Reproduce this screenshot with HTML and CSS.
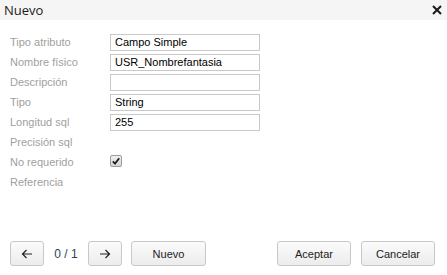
FILE: index.html
```html
<!DOCTYPE html>
<html lang="es">
<head>
<meta charset="utf-8">
<title>Nuevo</title>
<link rel="stylesheet" href="styles.css">
</head>
<body>
<div class="dialog">
  <div class="titlebar">
    <span class="title">Nuevo</span>
    <span class="close" aria-label="Cerrar">
      <svg width="10" height="10" viewBox="0 0 10 10"><path d="M1 1 L9 9 M9 1 L1 9" stroke="#1a1a1a" stroke-width="2" fill="none"/></svg>
    </span>
  </div>
  <div class="form">
    <div class="row"><label class="lbl">Tipo atributo</label><div class="field">Campo Simple</div></div>
    <div class="row"><label class="lbl">Nombre físico</label><div class="field">USR_Nombrefantasia</div></div>
    <div class="row"><label class="lbl">Descripción</label><div class="field"></div></div>
    <div class="row"><label class="lbl">Tipo</label><div class="field">String</div></div>
    <div class="row"><label class="lbl">Longitud sql</label><div class="field">255</div></div>
    <div class="row"><label class="lbl">Precisión sql</label></div>
    <div class="row"><label class="lbl">No requerido</label>
      <span class="check"><svg width="8" height="8" viewBox="0 0 8 8"><path d="M0.8 4.4 L3 6.6 L7.2 1.2" stroke="#1e1e1e" stroke-width="1.8" fill="none"/></svg></span>
    </div>
    <div class="row"><label class="lbl">Referencia</label></div>
  </div>
  <div class="footer">
    <div class="group">
      <button class="btn icon-btn"><svg width="12" height="10" viewBox="0 0 12 10"><path d="M11 5 H1.5 M5.5 1 L1.5 5 L5.5 9" stroke="#222" stroke-width="1.2" fill="none"/></svg></button>
      <span class="counter">0 / 1</span>
      <button class="btn icon-btn"><svg width="12" height="10" viewBox="0 0 12 10"><path d="M1 5 H10.5 M6.5 1 L10.5 5 L6.5 9" stroke="#222" stroke-width="1.2" fill="none"/></svg></button>
      <button class="btn nuevo">Nuevo</button>
    </div>
    <div class="group right">
      <button class="btn wide">Aceptar</button>
      <button class="btn wide">Cancelar</button>
    </div>
  </div>
</div>
</body>
</html>
```
FILE: styles.css
```css
html, body {
  margin: 0;
  padding: 0;
  background: #fff;
}
.dialog {
  width: 447px;
  height: 275px;
  display: flex;
  flex-direction: column;
  font-family: "Liberation Sans", Arial, sans-serif;
}
.titlebar {
  height: 20px;
  background: #f5f5f5;
  display: flex;
  align-items: center;
  justify-content: space-between;
  padding: 0 4px 0 4px;
}
.title {
  font-family: "Open Sans", "DejaVu Sans", sans-serif;
  font-size: 13px;
  color: #1b1b1b;
  line-height: 20px;
}
.close {
  display: flex;
  width: 10px;
  height: 10px;
  margin-right: 1px;
}
.form {
  flex: 1;
  padding: 12px 0 0 10px;
}
.row {
  height: 20px;
  display: flex;
  align-items: center;
}
.lbl {
  width: 100px;
  font-size: 11px;
  color: #a0a0a0;
}
.field {
  width: 140px;
  height: 15px;
  border: 1px solid #c9c9c9;
  padding: 0 4px;
  font-size: 11px;
  line-height: 15px;
  color: #000;
  background: #fff;
}
.check {
  width: 10px;
  height: 10px;
  border: 1px solid #9c9c9c;
  border-radius: 2px;
  background: linear-gradient(#f0f0f0, #d6d6d6);
  display: flex;
  align-items: center;
  justify-content: center;
  margin-top: -2px;
}
.footer {
  display: flex;
  justify-content: space-between;
  padding: 0 12px 9px 10px;
}
.group {
  display: flex;
  align-items: center;
}
.btn {
  height: 25px;
  box-sizing: border-box;
  border: 1px solid #c8c8c8;
  border-radius: 3px;
  background: linear-gradient(#fbfbfb, #ececec);
  font-family: "Liberation Sans", Arial, sans-serif;
  font-size: 11px;
  color: #222;
  padding: 0;
  display: flex;
  align-items: center;
  justify-content: center;
}
.icon-btn {
  width: 34px;
}
.counter {
  font-size: 12px;
  color: #2f3f55;
  width: 44px;
  text-align: center;
}
.nuevo {
  width: 75px;
  margin-left: 9px;
}
.wide {
  width: 74px;
}
.right {
  gap: 10px;
}
```
